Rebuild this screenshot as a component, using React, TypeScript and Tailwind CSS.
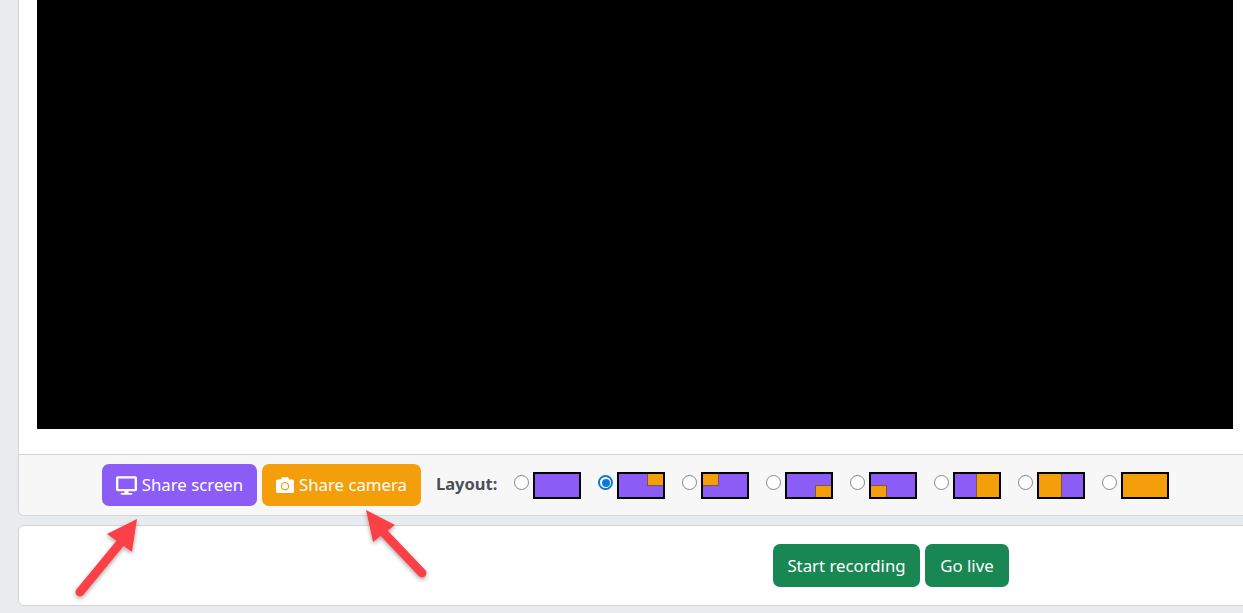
import React from 'react';
import { FaDesktop, FaCamera } from 'react-icons/fa';

const thumbs = [
  { base: 'bg-[#8b5cf6]', inset: '' },
  { base: 'bg-[#8b5cf6]', inset: 'top-0 right-0 w-[16px] h-[12px] border-l border-b' },
  { base: 'bg-[#8b5cf6]', inset: 'top-0 left-0 w-[16px] h-[12px] border-r border-b' },
  { base: 'bg-[#8b5cf6]', inset: 'bottom-0 right-0 w-[16px] h-[12px] border-l border-t' },
  { base: 'bg-[#8b5cf6]', inset: 'bottom-0 left-0 w-[16px] h-[12px] border-r border-t' },
  { base: 'bg-[#8b5cf6]', inset: 'top-0 bottom-0 right-0 w-[23px] border-l' },
  { base: 'bg-[#f59e0b]', inset: '', half: true },
  { base: 'bg-[#f59e0b]', inset: '' },
];

const LayoutOption = ({ idx }: { idx: number }) => {
  const t = thumbs[idx];
  return (
    <label className="flex items-start w-[84px] shrink-0">
      <span
        className={
          idx === 1
            ? 'mt-[3px] w-[15px] h-[15px] rounded-full border-2 border-[#0d78d8] bg-white flex items-center justify-center shrink-0'
            : 'mt-[3px] w-[15px] h-[15px] rounded-full border border-[#858585] bg-white shrink-0'
        }
      >
        {idx === 1 && <span className="block w-[8px] h-[8px] rounded-full bg-[#0d78d8]" />}
      </span>
      <span className={`relative ml-[4px] block w-[48px] h-[27px] border-2 border-black ${t.base}`}>
        {t.inset && <span className={`absolute bg-[#f59e0b] border-[#7a5a3a] ${t.inset}`} />}
        {t.half && <span className="absolute top-0 bottom-0 right-0 w-[22px] bg-[#8b5cf6] border-l border-[#7a5a3a]" />}
      </span>
    </label>
  );
};

const Arrows = () => (
  <svg className="absolute inset-0 pointer-events-none" width="1243" height="613" viewBox="0 0 1243 613">
    <defs>
      <filter id="arrowShadow" x="-30%" y="-30%" width="160%" height="160%">
        <feDropShadow dx="0" dy="2" stdDeviation="2" floodColor="#000" floodOpacity="0.35" />
      </filter>
    </defs>
    <g filter="url(#arrowShadow)">
      <path d="M80 592 L122 541" stroke="#fb4146" strokeWidth="9" strokeLinecap="round" fill="none" />
      <path d="M137 519 L107 534 L132 552 Z" fill="#fb4146" />
      <path d="M422 573 L382 531" stroke="#fb4146" strokeWidth="9" strokeLinecap="round" fill="none" />
      <path d="M366 510 L395 525 L373 542 Z" fill="#fb4146" />
    </g>
  </svg>
);

export default function App() {
  return (
    <div className="relative w-[1243px] h-[613px] overflow-hidden bg-[#e9ecef] pl-[18px] font-['Noto_Sans','Open_Sans',sans-serif]">
      <div className="w-[1746px] bg-white border-x border-b border-[#d3d5d7] rounded-b-[6px]">
        <div className="pl-[18px] pb-[25px]">
          <div className="w-[1196px] h-[429px] bg-black" />
        </div>
        <div className="h-[61px] bg-[#f7f7f7] border-t border-[#d0d2d4] rounded-b-[6px] pl-[83px] pt-[9px] flex items-start">
          <button className="h-[42px] w-[155px] rounded-[7px] bg-[#8b5cf6] text-white text-[16.8px] flex items-center justify-center gap-[5px]">
            <FaDesktop className="text-[21px]" />
            <span>Share screen</span>
          </button>
          <button className="ml-[5px] h-[42px] w-[159px] rounded-[7px] bg-[#f59e0b] text-white text-[16.8px] flex items-center justify-center gap-[5px]">
            <FaCamera className="text-[18px]" />
            <span>Share camera</span>
          </button>
          <span className="ml-[15px] mt-[8px] text-[16.5px] font-bold text-[#495057]">Layout:</span>
          <div className="ml-[17px] mt-[8px] flex">
            {thumbs.map((_, i) => (
              <LayoutOption key={i} idx={i} />
            ))}
          </div>
        </div>
      </div>
      <div className="mt-[9px] w-[1746px] h-[81px] bg-white border border-[#d3d5d7] rounded-[6px] flex items-start justify-center gap-[5px] pt-[18px]">
        <button className="h-[43px] w-[147px] rounded-[7px] bg-[#198754] text-white text-[16.8px]">Start recording</button>
        <button className="h-[43px] w-[84px] rounded-[7px] bg-[#198754] text-white text-[16.8px]">Go live</button>
      </div>
      <Arrows />
    </div>
  );
}
